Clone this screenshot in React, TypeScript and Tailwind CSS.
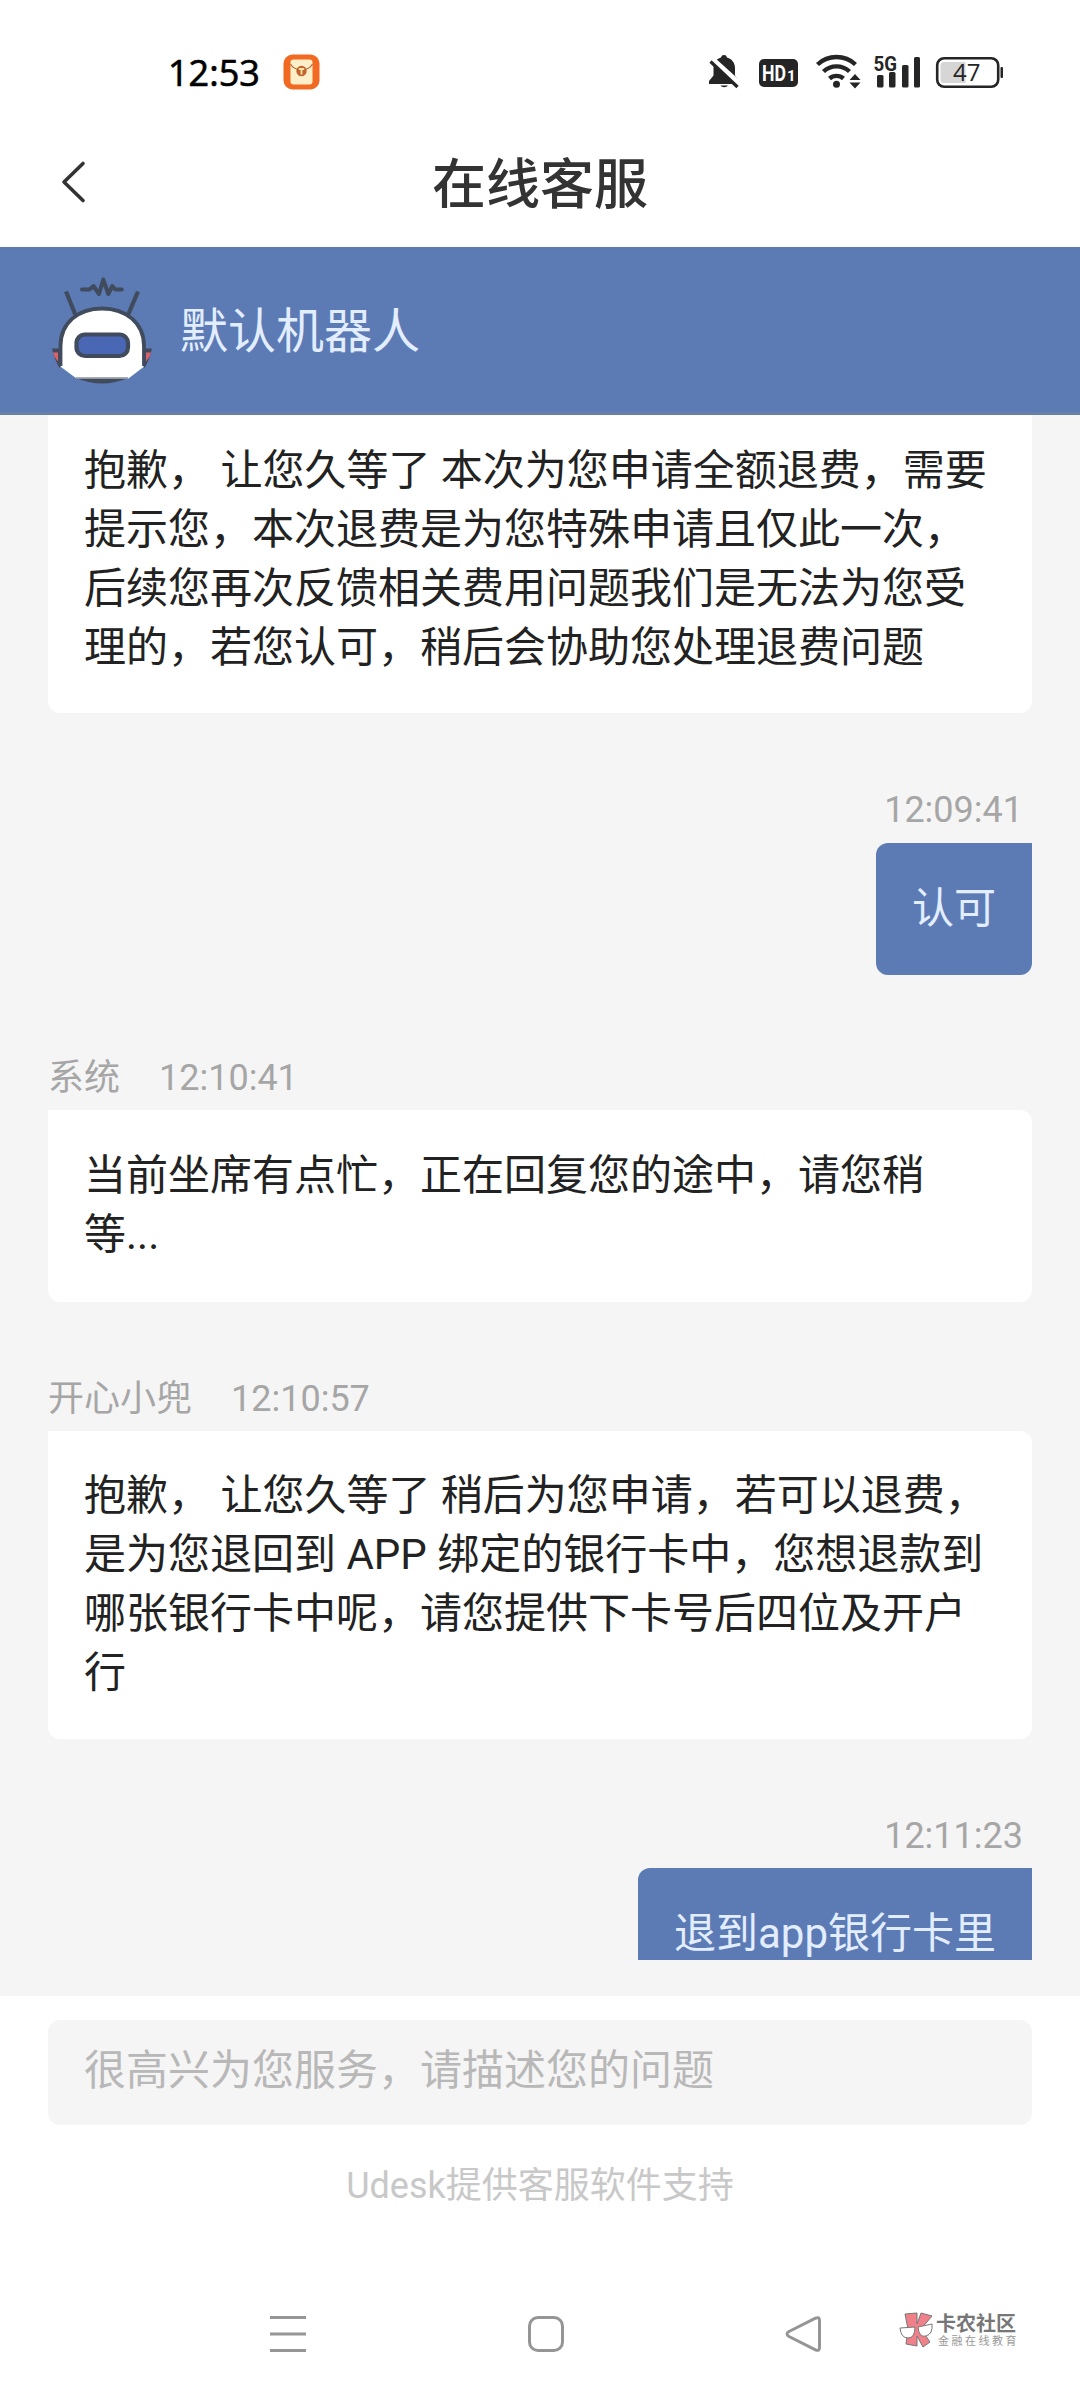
import type { ReactNode } from 'react';

function StatusBar() {
  return (
    <div className="flex h-[117px] shrink-0 items-start justify-between pr-[76px] pl-[168px] pt-[50px]">
      <div className="flex h-[44px] items-center">
        <span className="w-[115px] pt-[2px] font-['Open_Sans'] text-[36px] leading-[44px] font-medium text-black [-webkit-text-stroke:0.7px_black]">12:53</span>
        <svg width="37" height="36" viewBox="0 0 37 36" className="shrink-0">
          <rect x="0.5" y="0.5" width="36" height="35" rx="9" fill="#f26a21" />
          <rect x="7.5" y="5.5" width="22" height="25" rx="3" fill="#fdf0c8" />
          <path d="M7.5 10 Q10 15 18.5 16.5 Q27 15 29.5 10" fill="none" stroke="#b5683a" strokeWidth="1.2" />
          <circle cx="18.5" cy="17" r="5.2" fill="#c4632d" />
          <path d="M15.8 15h5.4M18.5 15v5.5" stroke="#fde3a6" strokeWidth="1.8" />
        </svg>
      </div>
      <svg width="296" height="44" viewBox="708 50 296 44" className="shrink-0">
        <g fill="#252525">
          <path d="M724 55a3 3 0 0 1 3 2.400c5 1.400 8 5.500 8 10.600v7.500l4 5.500v3h-30v-3l4.500-5.500v-7.500c0-5.100 2.500-9.200 7.500-10.600a3 3 0 0 1 3-2.400zM720.500 85.500h7.500a4 2.800 0 0 1-7.500 0z" />
          <path d="M711 58l31 28" stroke="#fff" strokeWidth="5.500" />
          <path d="M710.500 61.500l27 25.500" stroke="#252525" strokeWidth="3.200" />
          <rect x="759" y="59" width="39" height="28" rx="5" />
          <text x="762" y="80.800" fill="#fff" fontFamily="Roboto" fontSize="22.500" fontWeight="700" textLength="24" lengthAdjust="spacingAndGlyphs">HD</text>
          <text x="787" y="80.800" fill="#fff" fontFamily="Roboto" fontSize="15" fontWeight="700">1</text>
          <circle cx="836.500" cy="84.300" r="3.500" />
        </g>
        <g fill="none" stroke="#252525" strokeWidth="4.400">
          <path d="M817.500 64.500a28 28 0 0 1 38 0" />
          <path d="M823.500 71.500a19 19 0 0 1 26 0" />
          <path d="M829.500 78.500a10.500 10.500 0 0 1 14 0" />
        </g>
        <path d="M855 74l5.500 6h-11zM855 88.500l-5.500-6h11z" fill="#252525" />
        <text x="873.500" y="70.500" fill="#252525" fontFamily="Roboto" fontSize="21" fontWeight="700" textLength="23.500" lengthAdjust="spacingAndGlyphs">5G</text>
        <g fill="#252525">
          <rect x="877" y="75" width="6.500" height="12.500" rx="1.500" />
          <rect x="889" y="72" width="6.500" height="15.500" rx="1.500" />
          <rect x="902" y="65" width="6.500" height="22.500" rx="1.500" />
          <rect x="914" y="57" width="6" height="30.500" rx="1.500" />
          <rect x="1000.500" y="67" width="2.500" height="11" rx="1" />
        </g>
        <rect x="937.200" y="58.200" width="61" height="28.600" rx="7" fill="none" stroke="#252525" strokeWidth="2.600" />
        <path d="M944 62h21.500v21h-21.500a3.500 3.500 0 0 1-3.500-3.500v-14a3.500 3.500 0 0 1 3.500-3.500z" fill="#d6d6d6" />
        <text x="953" y="81" fill="#252525" fontFamily="Open Sans" fontSize="24" textLength="27.500" lengthAdjust="spacingAndGlyphs">47</text>
      </svg>
    </div>
  );
}

function TitleBar() {
  return (
    <div className="grid h-[130px] shrink-0 grid-cols-[1fr_auto_1fr] items-center">
      <svg width="28" height="44" viewBox="0 0 28 44" className="ml-[60px]">
        <path d="M23 3.500L4 22L23 40.500" fill="none" stroke="#333" strokeWidth="3.600" strokeLinecap="round" strokeLinejoin="round" />
      </svg>
      <h1 className="pt-[7px] text-[54px] leading-[80px] font-medium text-[#333]">在线客服</h1>
    </div>
  );
}

function Robot() {
  return (
    <svg width="102" height="110" viewBox="0 1 102 110" className="shrink-0">
      <path d="M1 74.500h8v20q-5-7-8-20zM101 74.500h-8v20q5-7 8-20z" fill="#45485a" />
      <path d="M2 78.500h5v9q-4-4-5-9zM100 78.500h-5v9q4-4 5-9z" fill="#d9636b" />
      <path d="M24 103.500Q51 115.500 78 103.500z" fill="#414b5e" />
      <path d="M15 17.500L24.500 41M87 17.500L77 41" stroke="#414b5e" strokeWidth="4.200" />
      <path d="M31 15.500h7.500l4-3.500 5.500 8 4.300-14.500 5 14.500 4-8 3 3.500h6.500" fill="none" stroke="#414b5e" strokeWidth="4" strokeLinecap="round" strokeLinejoin="round" />
      <path d="M10 93V72C10 49 27 34.500 51 34.500s41.500 14.500 41.500 37.500v21L77.500 104.500h-52z" fill="#fff" />
      <path d="M9.500 92V72C9.500 49 27 34.500 51 34.500s42 14.500 42 37.500v20" fill="none" stroke="#414b5e" strokeWidth="3.800" />
      <path d="M25 104h52" stroke="#8d929b" strokeWidth="1.500" />
      <rect x="25.500" y="60.500" width="51.500" height="21.500" rx="8.500" fill="#4a67b5" stroke="#414b5e" strokeWidth="4.200" />
    </svg>
  );
}

function AgentHeader() {
  return (
    <div className="flex h-[168px] shrink-0 items-center border-b-[3px] border-[#6780a8] bg-[#5c7bb4] pl-[51px] text-[#e2edff]">
      <Robot />
      <span className="ml-[27px] pt-[5px] text-[48px] leading-[68px]">默认机器人</span>
    </div>
  );
}

function Meta({ name, time }: { name?: string; time: string }) {
  return (
    <div className={name ? 'flex h-[64px] items-center gap-[39px] text-[36px] leading-[64px] text-[#a6a6a6]' : 'h-[58px] pt-px pr-[9px] text-right text-[36px] leading-[58px] text-[#a6a6a6]'}>
      {name && <span>{name}</span>}
      <span>{time}</span>
    </div>
  );
}

function AgentCard({ children, className }: { children: ReactNode; className: string }) {
  return (
    <div className={`w-[984px] rounded-[12px] rounded-tl-none bg-white px-[36px] text-[42px] leading-[59px] text-[#222] ${className}`}>
      {children}
    </div>
  );
}

function UserBubble({ children, className }: { children: ReactNode; className: string }) {
  return (
    <div className={`ml-auto w-fit rounded-[12px] rounded-tr-none bg-[#5c7bb4] px-[36px] pt-[36px] text-[42px] leading-[59px] text-[#e2edff] ${className}`}>
      {children}
    </div>
  );
}

function Conversation() {
  return (
    <div className="h-[1581px] shrink-0 bg-[#f5f5f5] px-[48px] pb-[36px]">
      <div className="h-[1545px] overflow-hidden">
        <AgentCard className="-mt-[12px] h-[310px] pt-[38px]">
          抱歉， 让您久等了 本次为您申请全额退费，需要提示您，本次退费是为您特殊申请且仅此一次，后续您再次反馈相关费用问题我们是无法为您受理的，若您认可，稍后会协助您处理退费问题
        </AgentCard>
        <div className="mt-[67px]">
          <Meta time="12:09:41" />
          <UserBubble className="mt-[5px] h-[132px]">认可</UserBubble>
        </div>
        <div className="mt-[71px]">
          <Meta name="系统" time="12:10:41" />
          <AgentCard className="h-[192px] pt-[36px]">当前坐席有点忙，正在回复您的途中，请您稍等...</AgentCard>
        </div>
        <div className="mt-[65px]">
          <Meta name="开心小兜" time="12:10:57" />
          <AgentCard className="h-[308px] pt-[35px]">
            抱歉， 让您久等了 稍后为您申请，若可以退费，是为您退回到 APP 绑定的银行卡中，您想退款到哪张银行卡中呢，请您提供下卡号后四位及开户行
          </AgentCard>
        </div>
        <div className="mt-[67px]">
          <Meta time="12:11:23" />
          <UserBubble className="mt-[4px] h-[132px]">退到app银行卡里</UserBubble>
        </div>
      </div>
    </div>
  );
}

function Composer() {
  return (
    <div className="h-[226px] shrink-0 px-[48px] pt-[24px]">
      <div className="h-[105px] rounded-[12px] bg-[#f5f5f5] px-[36px] text-[42px] leading-[101px] text-[#b8b8b8]">
        很高兴为您服务，请描述您的问题
      </div>
      <p className="mt-[36px] text-center text-[36px] leading-[50px] text-[#c8c8c8]">Udesk提供客服软件支持</p>
    </div>
  );
}

function Watermark() {
  return (
    <div className="flex items-start">
      <svg width="34" height="36" viewBox="0 0 34 36" className="shrink-0">
        <path d="M6 2L18 1V12L22 1L33 4L22 17L31 30L24 35L18 24V34L7 32L9 17z" fill="#f0808a" stroke="#777" strokeWidth="1" />
        <path d="M1 16l15-1q0 11-7 11T1 16zM19 15l14-3q1 10-6 12t-8-9z" fill="#fff" stroke="#777" strokeWidth="1" />
      </svg>
      <div className="ml-[3px] flex flex-col text-[#777]">
        <span className="pt-px text-[20px] leading-[22px] font-bold whitespace-nowrap">卡农社区</span>
        <span className="mt-px ml-[2px] text-[11px] leading-[12px] tracking-[2.500px] whitespace-nowrap text-[#999]">金融在线教育</span>
      </div>
    </div>
  );
}

function SystemNav() {
  return (
    <div className="flex h-[178px] shrink-0 items-start pt-[93px] pl-[269px]">
      <svg width="38" height="38" viewBox="0 0 38 38" fill="none" stroke="#959595" strokeWidth="3.200">
        <path d="M1 2.500h36M1 19h36M1 35.500h36" />
      </svg>
      <svg width="38" height="38" viewBox="0 0 38 38" className="ml-[220px]" fill="none" stroke="#959595" strokeWidth="3">
        <rect x="2.500" y="2.500" width="33" height="33" rx="8.500" />
      </svg>
      <svg width="38" height="38" viewBox="0 0 38 38" className="ml-[220px]" fill="none" stroke="#959595" strokeWidth="3">
        <path d="M4 16.500L30.500 3.200Q34.500 1.500 34.500 5.500V32.500Q34.500 36.500 30.500 34.800L4 21.500Q0 19 4 16.500z" />
      </svg>
      <div className="-mt-[3px] ml-[76px]">
        <Watermark />
      </div>
    </div>
  );
}

export default function App() {
  return (
    <div className="flex h-[2400px] w-[1080px] flex-col overflow-hidden bg-white font-[Roboto,'Noto_Sans_CJK_SC',sans-serif]">
      <StatusBar />
      <TitleBar />
      <AgentHeader />
      <Conversation />
      <Composer />
      <SystemNav />
    </div>
  );
}
